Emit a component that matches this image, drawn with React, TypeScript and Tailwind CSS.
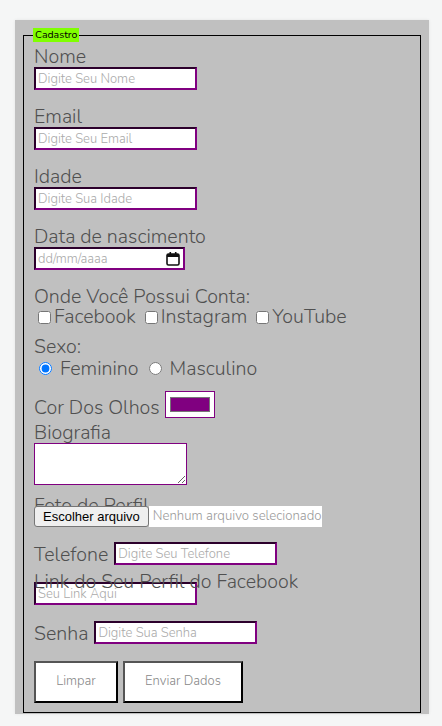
import React from 'react';

const font = "font-['Nunito','Lato','Open_Sans',sans-serif] font-light";
const inputCls =
  "block w-[163px] h-[23px] border-2 [border-style:inset] border-[purple] bg-white px-[2px] text-[13px] text-[#555] placeholder:text-[#aaa] outline-none";

const Label: React.FC<{ children: React.ReactNode; className?: string }> = ({ children, className = '' }) => (
  <label className={`block text-[19.6px] leading-[20px] text-[#505050] ${className}`}>{children}</label>
);

export default function App() {
  return (
    <div className={`min-h-[726px] bg-[#f5f6f6] pt-[20px] ${font}`}>
      <div className="ml-[15px] w-[414px] bg-[#c0c0c0] px-[8px] pt-[8px] pb-[1px] shadow-[0_0_3px_rgba(0,0,0,0.08)]">
        <fieldset className="border border-black px-[10px] pt-[5px] pb-[9px]">
          <legend className="ml-[-1px] bg-[#80ff00] px-[2px] text-[10.5px] leading-[14px] text-black font-normal">
            Cadastro
          </legend>

          <Label>Nome</Label>
          <input className={inputCls} placeholder="Digite Seu Nome" />

          <Label className="mt-[17px]">Email</Label>
          <input className={inputCls} placeholder="Digite Seu Email" />

          <Label className="mt-[17px]">Idade</Label>
          <input className={inputCls} placeholder="Digite Sua Idade" />

          <Label className="mt-[17px]">Data de nascimento</Label>
          <div className="relative w-[151px]">
            <input className={`${inputCls} !w-[151px]`} placeholder="dd/mm/aaaa" />
            <svg className="absolute right-[5px] top-[4px]" width="14" height="15" viewBox="0 0 14 15">
              <rect x="1" y="3" width="12" height="11" rx="1.5" fill="none" stroke="#111" strokeWidth="1.6" />
              <rect x="1" y="3" width="12" height="3" fill="#111" />
              <rect x="3.5" y="1" width="1.6" height="3" fill="#111" />
              <rect x="8.9" y="1" width="1.6" height="3" fill="#111" />
            </svg>
          </div>

          <Label className="mt-[17px]">Onde Você Possui Conta:</Label>
          <div className="flex items-center h-[20px] text-[19.6px] leading-[20px] text-[#505050]">
            <input type="checkbox" className="ml-[4px] mr-[3px] w-[13px] h-[13px]" />
            <span>Facebook</span>
            <input type="checkbox" className="ml-[9px] mr-[3px] w-[13px] h-[13px]" />
            <span>Instagram</span>
            <input type="checkbox" className="ml-[9px] mr-[3px] w-[13px] h-[13px]" />
            <span>YouTube</span>
          </div>

          <Label className="mt-[10px]">Sexo:</Label>
          <div className="flex items-center h-[23px] text-[19.6px] leading-[20px] text-[#505050]">
            <input type="radio" name="sexo" defaultChecked className="ml-[5px] mr-[8px] w-[13px] h-[13px]" />
            <span>Feminino</span>
            <input type="radio" name="sexo" className="ml-[10px] mr-[8px] w-[13px] h-[13px]" />
            <span>Masculino</span>
          </div>

          <div className="mt-[11px] flex items-end">
            <Label>Cor Dos Olhos</Label>
            <input
              type="color"
              defaultValue="#800080"
              className="ml-[5px] w-[50px] h-[27px] border border-[purple] bg-white px-[2px] py-[1px] cursor-pointer"
            />
          </div>

          <Label className="mt-[5px]">Biografia</Label>
          <textarea className="block w-[153px] h-[42px] border border-[purple] bg-white outline-none" />

          <Label className="mt-[11px] h-[10px] overflow-visible">Foto de Perfil</Label>
          <div className="flex items-center h-[21px]">
            <button className="h-[21px] px-[8px] border border-[#767676] rounded-[3px] bg-[#efefef] text-[13px] text-black font-['Liberation_Sans',sans-serif] font-normal">
              Escolher arquivo
            </button>
            <span className="h-[21px] bg-white pl-[4px] pr-[1px] text-[13.2px] leading-[21px] text-[#999]">
              Nenhum arquivo selecionado
            </span>
          </div>

          <div className="mt-[15px] flex items-end">
            <Label>Telefone</Label>
            <input className={`${inputCls} ml-[6px]`} placeholder="Digite Seu Telefone" />
          </div>

          <Label className="mt-[7px] h-[10px] overflow-visible">Link do Seu Perfil do Facebook</Label>
          <input className={inputCls} placeholder="Seu Link Aqui" />

          <div className="mt-[16px] flex items-end">
            <Label>Senha</Label>
            <input type="password" className={`${inputCls} ml-[6px]`} placeholder="Digite Sua Senha" />
          </div>

          <div className="mt-[17px] flex gap-[5px]">
            <button className="w-[84px] h-[42px] border-2 [border-style:outset] border-[#555] bg-white text-[13px] text-[#888]">
              Limpar
            </button>
            <button className="w-[120px] h-[42px] border-2 [border-style:outset] border-[#555] bg-white text-[13px] text-[#888]">
              Enviar Dados
            </button>
          </div>
        </fieldset>
      </div>
    </div>
  );
}
